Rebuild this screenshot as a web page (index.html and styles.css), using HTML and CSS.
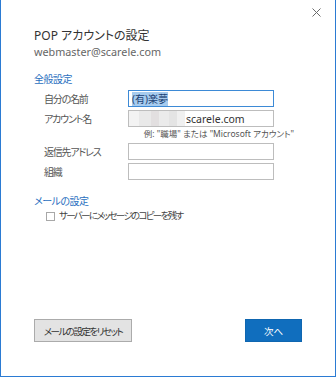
FILE: index.html
```html
<!DOCTYPE html>
<html lang="ja">
<head>
    <meta charset="UTF-8">
    <meta name="viewport" content="width=device-width, initial-scale=1.0">
    <title>POP アカウントの設定</title>
    <link rel="stylesheet" href="styles.css">
</head>
<body>
    <div class="dialog">
        <div class="title-bar">
            <span class="close-button">
                <svg width="9" height="9" viewBox="0 0 9 9"><path d="M0.5 0.5L8.5 8.5M8.5 0.5L0.5 8.5" stroke="#6b6b6b" stroke-width="1" fill="none"/></svg>
            </span>
        </div>
        <header class="dialog-header">
            <h1>POP アカウントの設定</h1>
            <p>webmaster@scarele.com</p>
        </header>

        <h2 class="section-title">全般設定</h2>
        <div class="form-grid">
            <label>自分の名前</label>
            <div class="field focused"><span class="selected">(有)楽夢</span></div>

            <label>アカウント名</label>
            <div class="field"><span class="mosaic"></span><span>scarele.com</span></div>

            <div class="hint">例: "職場" または "Microsoft アカウント"</div>

            <label>返信先アドレス</label>
            <div class="field"></div>

            <label>組織</label>
            <div class="field"></div>
        </div>

        <h2 class="section-title mail">メールの設定</h2>
        <div class="check-row">
            <span class="checkbox"></span>
            <span class="check-label">サーバーにメッセージのコピーを残す</span>
        </div>

        <div class="button-row">
            <button class="btn reset">メールの設定をリセット</button>
            <button class="btn next">次へ</button>
        </div>
    </div>
</body>
</html>
```

FILE: styles.css
```css
* {
    margin: 0;
    padding: 0;
    box-sizing: border-box;
}

body {
    font-family: 'Noto Sans', 'Noto Sans CJK JP', sans-serif;
    font-feature-settings: "palt";
    background: #ffffff;
    color: #444444;
}

.dialog {
    width: 336px;
    height: 377px;
    border-left: 1px solid #2b7bd3;
    border-right: 1px solid #2b7bd3;
    border-bottom: 1px solid #2b7bd3;
    background: #ffffff;
    padding: 0 33px;
    display: flex;
    flex-direction: column;
}

.title-bar {
    height: 17px;
    display: flex;
    justify-content: flex-end;
    align-items: flex-end;
    margin-right: -19px;
}

.close-button {
    width: 9px;
    height: 9px;
    display: block;
}

.close-button svg {
    display: block;
}

.dialog-header h1 {
    font-size: 12px;
    font-weight: normal;
    color: #333333;
    line-height: 18px;
    margin-top: 10px;
}

.dialog-header p {
    font-size: 10.8px;
    color: #666666;
    line-height: 14px;
}

.section-title {
    font-size: 10px;
    font-weight: normal;
    color: #2a6fc0;
    line-height: 14px;
    margin-top: 13px;
    letter-spacing: -0.5px;
}

.section-title.mail {
    margin-top: 14px;
}

.form-grid {
    display: grid;
    grid-template-columns: 84px 146px;
    row-gap: 3px;
    margin-top: 4px;
    margin-left: 10px;
    align-items: center;
    font-size: 10px;
}

.form-grid label {
    color: #555555;
    line-height: 14px;
    white-space: nowrap;
    letter-spacing: -1.2px;
}

.field {
    height: 17px;
    border: 1px solid #bdbdbd;
    background: #ffffff;
    display: flex;
    align-items: center;
    padding-left: 3px;
    font-size: 10.5px;
    color: #333333;
    white-space: nowrap;
    overflow: hidden;
}

.field.focused {
    border-color: #3d8ad6;
}

.selected {
    background: #a6cbee;
    color: #1b3f73;
    font-size: 10px;
    line-height: 14px;
}

.mosaic {
    width: 56px;
    height: 15px;
    margin-left: -3px;
    margin-right: 1px;
    background:
        linear-gradient(90deg, #f3f3f3 0 10px, #e9e9e9 10px 22px, #e2dfe0 22px 30px, #ebebeb 30px 40px, #e4e4e4 40px 48px, #f0f0f0 48px);
}

.hint {
    grid-column: 1 / 3;
    text-align: right;
    font-size: 8.5px;
    color: #555555;
    line-height: 12px;
    margin-right: -20px;
    margin-bottom: 0;
    margin-top: -2px;
    white-space: nowrap;
}

.check-row {
    display: flex;
    align-items: center;
    gap: 4px;
    margin-top: 1px;
    margin-left: 12px;
    font-size: 9.5px;
    color: #444444;
    line-height: 14px;
}

.check-label {
    letter-spacing: -1.7px;
}

.checkbox {
    width: 9px;
    height: 9px;
    border: 1px solid #a8a8a8;
    background: #ffffff;
}

.button-row {
    margin-top: auto;
    margin-bottom: 34px;
    display: flex;
    justify-content: space-between;
}

.btn {
    height: 23px;
    font-family: 'Noto Sans', 'Noto Sans CJK JP', sans-serif;
    font-feature-settings: "palt";
    font-size: 9.5px;
    white-space: nowrap;
}

.btn.reset {
    width: 98px;
    background: #e3e3e3;
    border: 1px solid #ababab;
    color: #333333;
    letter-spacing: -1.5px;
}

.btn.next {
    width: 57px;
    background: #106ebe;
    border: 1px solid #0f66b0;
    color: #ffffff;
}
```
